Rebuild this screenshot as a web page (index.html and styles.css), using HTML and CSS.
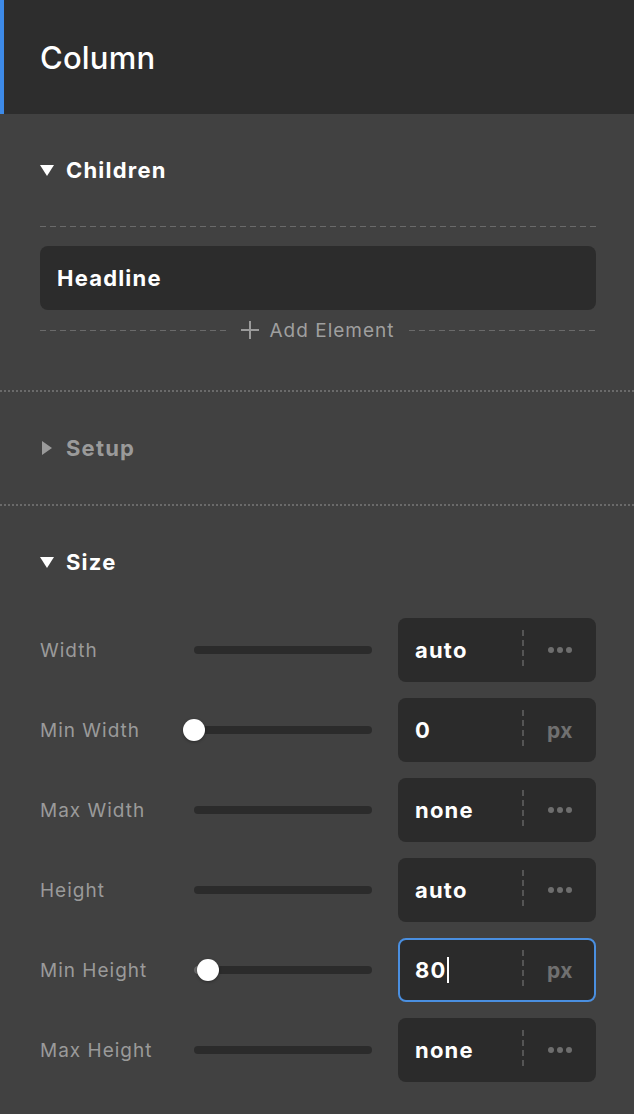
FILE: index.html
```html
<!DOCTYPE html>
<html lang="en">
<head>
    <meta charset="UTF-8">
    <meta name="viewport" content="width=device-width, initial-scale=1.0">
    <title>Column Settings</title>
    <link rel="stylesheet" href="styles.css">
</head>
<body>
    <div class="panel">
        <header class="panel-header">
            <h1>Column</h1>
        </header>

        <section class="section">
            <div class="section-title">
                <span class="caret caret-down"></span>
                <span>Children</span>
            </div>
            <div class="drop-line"></div>
            <div class="child-item">Headline</div>
            <div class="add-row">
                <span class="drop-line grow"></span>
                <button class="add-btn">
                    <svg width="20" height="20" viewBox="0 0 20 20">
                        <path d="M10 1v18M1 10h18" stroke="#9a9a9a" stroke-width="2" fill="none"/>
                    </svg>
                    Add Element
                </button>
                <span class="drop-line grow"></span>
            </div>
        </section>

        <section class="section closed">
            <div class="section-title">
                <span class="caret caret-right"></span>
                <span>Setup</span>
            </div>
        </section>

        <section class="section last">
            <div class="section-title">
                <span class="caret caret-down"></span>
                <span>Size</span>
            </div>

            <div class="rows">
                <div class="row">
                    <label>Width</label>
                    <div class="slider"><div class="track"></div></div>
                    <div class="field">
                        <span class="value">auto</span>
                        <span class="unit"><i class="dots"><b></b><b></b><b></b></i></span>
                    </div>
                </div>
                <div class="row">
                    <label>Min Width</label>
                    <div class="slider">
                        <div class="track"></div>
                        <div class="thumb" style="left: 0px"></div>
                    </div>
                    <div class="field">
                        <span class="value">0</span>
                        <span class="unit">px</span>
                    </div>
                </div>
                <div class="row">
                    <label>Max Width</label>
                    <div class="slider"><div class="track"></div></div>
                    <div class="field">
                        <span class="value">none</span>
                        <span class="unit"><i class="dots"><b></b><b></b><b></b></i></span>
                    </div>
                </div>
                <div class="row">
                    <label>Height</label>
                    <div class="slider"><div class="track"></div></div>
                    <div class="field">
                        <span class="value">auto</span>
                        <span class="unit"><i class="dots"><b></b><b></b><b></b></i></span>
                    </div>
                </div>
                <div class="row">
                    <label>Min Height</label>
                    <div class="slider">
                        <div class="track"><div class="fill" style="width: 14px"></div></div>
                        <div class="thumb" style="left: 14px"></div>
                    </div>
                    <div class="field focused">
                        <span class="value">80<span class="cursor"></span></span>
                        <span class="unit">px</span>
                    </div>
                </div>
                <div class="row">
                    <label>Max Height</label>
                    <div class="slider"><div class="track"></div></div>
                    <div class="field">
                        <span class="value">none</span>
                        <span class="unit"><i class="dots"><b></b><b></b><b></b></i></span>
                    </div>
                </div>
            </div>
        </section>
    </div>
</body>
</html>
```

FILE: styles.css
```css
* {
    box-sizing: border-box;
}
body {
    margin: 0;
    padding: 0;
    background-color: #414141;
    font-family: Inter, "Noto Sans", sans-serif;
    color: #fff;
}
.panel {
    width: 634px;
    min-height: 1114px;
    background: #414141;
}
.panel-header {
    height: 114px;
    background: #2d2d2d;
    border-left: 4px solid #3d8ae8;
    display: flex;
    align-items: center;
    padding-left: 36px;
}
.panel-header h1 {
    margin: 0;
    font-size: 31px;
    font-weight: 500;
    letter-spacing: 0.2px;
}
.section {
    padding: 42px 38px 50px 40px;
    border-bottom: 2px dotted #6a6a6a;
}
.section.closed {
    padding-bottom: 42px;
}
.section.last {
    border-bottom: none;
    padding-bottom: 33px;
}
.section-title {
    display: flex;
    align-items: center;
    height: 28px;
    font-size: 22px;
    font-weight: 700;
    letter-spacing: 1.2px;
}
.closed .section-title {
    color: #9a9a9a;
}
.caret {
    display: inline-block;
    width: 26px;
}
.caret-down::before {
    content: "";
    display: block;
    width: 0;
    height: 0;
    border-left: 7px solid transparent;
    border-right: 7px solid transparent;
    border-top: 11px solid #fff;
}
.caret-right::before {
    content: "";
    display: block;
    width: 0;
    height: 0;
    margin-left: 2px;
    border-top: 7px solid transparent;
    border-bottom: 7px solid transparent;
    border-left: 10px solid #9a9a9a;
}
.drop-line {
    display: block;
    height: 1px;
    margin-top: 42px;
    background: repeating-linear-gradient(to right, #6a6a6a 0 6px, transparent 6px 10px);
}
.drop-line.grow {
    flex: 1;
    margin-top: 0;
}
.child-item {
    margin-top: 19px;
    height: 64px;
    background: #2c2c2c;
    border-radius: 8px;
    display: flex;
    align-items: center;
    padding-left: 17px;
    font-size: 22px;
    font-weight: 700;
    letter-spacing: 1.2px;
}
.add-row {
    display: flex;
    align-items: center;
    height: 20px;
    margin-top: 10px;
}
.add-btn {
    display: flex;
    align-items: center;
    gap: 10px;
    padding: 0 14px 0 12px;
    background: none;
    border: none;
    color: #9f9f9f;
    font-family: inherit;
    font-size: 19px;
    letter-spacing: 1px;
    cursor: pointer;
}
.rows {
    margin-top: 42px;
    display: flex;
    flex-direction: column;
    gap: 16px;
}
.row {
    display: flex;
    align-items: center;
    height: 64px;
}
.row label {
    width: 154px;
    color: #9a9a9a;
    font-size: 19px;
    letter-spacing: 1px;
}
.slider {
    position: relative;
    width: 178px;
    height: 22px;
    display: flex;
    align-items: center;
}
.track {
    width: 100%;
    height: 8px;
    border-radius: 4px;
    background: #2b2b2b;
    overflow: hidden;
}
.fill {
    height: 100%;
    background: #6a6a6a;
}
.thumb {
    position: absolute;
    top: 0;
    width: 22px;
    height: 22px;
    margin-left: -11px;
    border-radius: 50%;
    background: #fff;
    box-shadow: 0 1px 3px rgba(0, 0, 0, 0.35);
}
.field {
    margin-left: 26px;
    width: 198px;
    height: 64px;
    background: #2b2b2b;
    border-radius: 8px;
    border: 2px solid transparent;
    display: flex;
    align-items: center;
}
.field.focused {
    border-color: #4a8fe0;
}
.value {
    width: 122px;
    padding-left: 15px;
    font-size: 22px;
    font-weight: 700;
    letter-spacing: 1.2px;
    display: flex;
    align-items: center;
}
.cursor {
    display: inline-block;
    width: 2px;
    height: 26px;
    margin-left: 0;
    background: #fff;
}
.unit {
    flex: 1;
    height: 40px;
    padding-left: 4px;
    display: flex;
    align-items: center;
    justify-content: center;
    color: #707070;
    font-size: 21px;
    font-weight: 700;
    letter-spacing: 0.5px;
    background: repeating-linear-gradient(to bottom, #555 0 6px, transparent 6px 10px) left center / 2px 100% no-repeat;
}
.dots {
    display: flex;
    gap: 3px;
}
.dots b {
    width: 6px;
    height: 6px;
    border-radius: 50%;
    background: #6e6e6e;
}
```
